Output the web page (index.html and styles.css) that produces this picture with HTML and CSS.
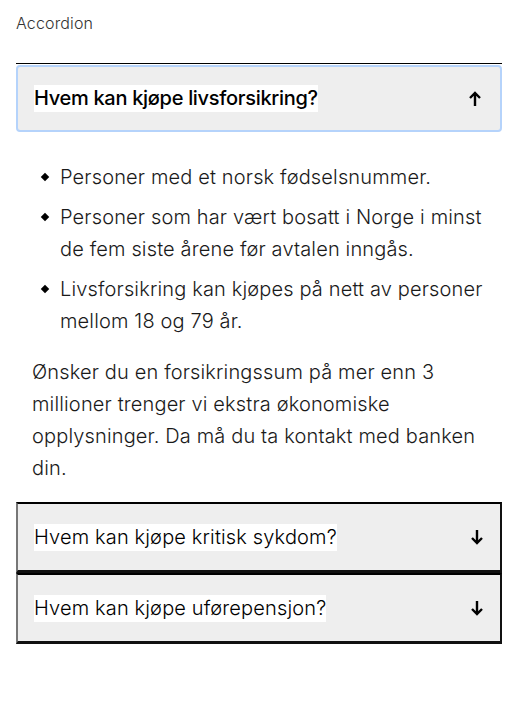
FILE: index.html
```html
<!DOCTYPE html>
<html lang="no">
<head>
<meta charset="utf-8">
<title>Accordion</title>
<link rel="stylesheet" href="styles.css">
</head>
<body>
<main class="page">
  <p class="label">Accordion</p>
  <div class="accordion">
    <section class="item open">
      <button class="header header-open" type="button">
        <span class="title title-bold">Hvem kan kjøpe livsforsikring?</span>
        <svg class="arrow" width="14" height="16" viewBox="0 0 14 16" aria-hidden="true"><path d="M7 15V2M2 7l5-5 5 5" fill="none" stroke="#000" stroke-width="2.4"/></svg>
      </button>
      <div class="body">
        <ul class="list">
          <li>Personer med et norsk fødselsnummer.</li>
          <li>Personer som har vært bosatt i Norge i minst de fem siste årene før avtalen inngås.</li>
          <li>Livsforsikring kan kjøpes på nett av personer mellom 18 og 79 år.</li>
        </ul>
        <p class="text">Ønsker du en forsikringssum på mer enn 3 millioner trenger vi ekstra økonomiske opplysninger. Da må du ta kontakt med banken din.</p>
      </div>
    </section>
    <section class="item">
      <button class="header header-closed" type="button">
        <span class="title">Hvem kan kjøpe kritisk sykdom?</span>
        <svg class="arrow" width="14" height="16" viewBox="0 0 14 16" aria-hidden="true"><path d="M7 1v13M2 9l5 5 5-5" fill="none" stroke="#000" stroke-width="2.4"/></svg>
      </button>
    </section>
    <section class="item">
      <button class="header header-closed" type="button">
        <span class="title">Hvem kan kjøpe uførepensjon?</span>
        <svg class="arrow" width="14" height="16" viewBox="0 0 14 16" aria-hidden="true"><path d="M7 1v13M2 9l5 5 5-5" fill="none" stroke="#000" stroke-width="2.4"/></svg>
      </button>
    </section>
  </div>
</main>
</body>
</html>
```
FILE: styles.css
```css
* { box-sizing: border-box; }
html, body { margin: 0; padding: 0; background: #fff; }
body {
  font-family: Inter, "Liberation Sans", Arial, sans-serif;
  font-weight: 300;
  letter-spacing: 0.15px;
  color: #1a1a1a;
}
.page { padding: 12px 16px; }
.label {
  margin: 0 0 29px;
  font-size: 16px;
  line-height: 22px;
  color: #333;
}
.accordion { border-top: 1px solid #000; display: flex; flex-direction: column; }
.item { display: flex; flex-direction: column; }
.header {
  display: flex;
  align-items: center;
  justify-content: space-between;
  width: 100%;
  margin: 0;
  background: #eeeeee;
  font: inherit;
  letter-spacing: inherit;
  color: #000;
  text-align: left;
  cursor: pointer;
}
.header-open {
  margin-top: 1px;
  height: 67px;
  padding: 0 16px 0 16px;
  border: 2px solid #b5d3fb;
  border-radius: 4px;
}
.header-closed {
  height: 71px;
  padding: 0 14px 0 16px;
  border-top: 2px solid #000;
  border-left: 2px solid #777;
  border-right: 2px solid #111;
  border-bottom: 3px solid #111;
  border-radius: 0;
}
.title {
  background: #fff;
  font-size: 20px;
  line-height: 27px;
}
.title-bold { font-weight: 500; letter-spacing: -0.3px; }
.arrow { flex: none; margin-right: 2px; }
.body { padding: 29px 16px 18px; }
.list {
  margin: 0;
  padding: 0;
  list-style: none;
  display: flex;
  flex-direction: column;
  gap: 8px;
}
.list li {
  position: relative;
  padding-left: 28px;
  font-size: 20px;
  line-height: 32px;
}
.list li::before {
  content: "";
  position: absolute;
  left: 10px;
  top: 13px;
  width: 6px;
  height: 6px;
  background: #000;
  transform: rotate(45deg);
}
.text {
  margin: 19px 0 0;
  font-size: 20px;
  line-height: 32px;
}
```
